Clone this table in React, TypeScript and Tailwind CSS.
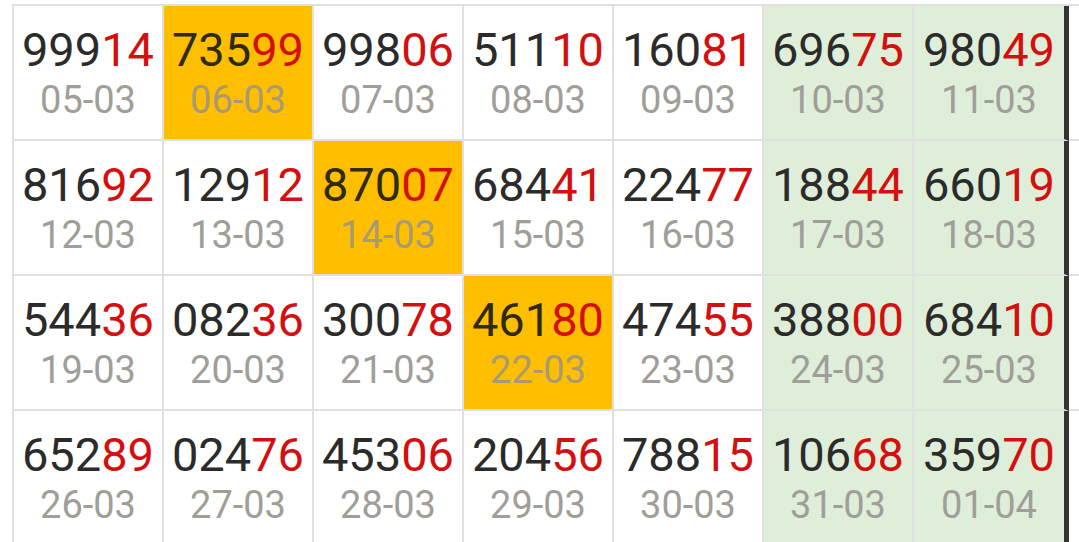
import React from "react";

type Cell = { n: string; d: string; hl?: boolean };

const rows: Cell[][] = [
  [
    { n: "99914", d: "05-03" },
    { n: "73599", d: "06-03", hl: true },
    { n: "99806", d: "07-03" },
    { n: "51110", d: "08-03" },
    { n: "16081", d: "09-03" },
    { n: "69675", d: "10-03" },
    { n: "98049", d: "11-03" },
  ],
  [
    { n: "81692", d: "12-03" },
    { n: "12912", d: "13-03" },
    { n: "87007", d: "14-03", hl: true },
    { n: "68441", d: "15-03" },
    { n: "22477", d: "16-03" },
    { n: "18844", d: "17-03" },
    { n: "66019", d: "18-03" },
  ],
  [
    { n: "54436", d: "19-03" },
    { n: "08236", d: "20-03" },
    { n: "30078", d: "21-03" },
    { n: "46180", d: "22-03", hl: true },
    { n: "47455", d: "23-03" },
    { n: "38800", d: "24-03" },
    { n: "68410", d: "25-03" },
  ],
  [
    { n: "65289", d: "26-03" },
    { n: "02476", d: "27-03" },
    { n: "45306", d: "28-03" },
    { n: "20456", d: "29-03" },
    { n: "78815", d: "30-03" },
    { n: "10668", d: "31-03" },
    { n: "35970", d: "01-04" },
  ],
];

function CellView({ c, col }: { c: Cell; col: number }) {
  const weekend = col >= 5;
  const bg = c.hl ? "bg-[#ffbf00]" : weekend ? "bg-[#dfeed8]" : "bg-white";
  const last = col === 6;
  const border = last
    ? "w-[155px] border-b-2 border-b-[#e0e0e0] border-r-[5px] border-r-[#333333]"
    : "w-[150px] border-b-2 border-r-2 border-[#e0e0e0]";
  return (
    <div className={`${bg} ${border} h-[135px] shrink-0 flex flex-col items-center justify-center`}>
      <div className={`text-[47px] leading-none tracking-normal ${c.hl ? "text-[#2f2a12]" : "text-[#2b2b2b]"}`}>
        {c.n.slice(0, 3)}
        <span className="text-[#d40f0f]">{c.n.slice(3)}</span>
      </div>
      <div className={`mt-[8px] text-[38px] leading-none ${c.hl ? "text-[#a89a74]" : "text-[#a09e99]"}`}>
        {c.d}
      </div>
    </div>
  );
}

export default function App() {
  return (
    <div
      className="w-[1079px] h-[542px] overflow-hidden bg-white"
      style={{ fontFamily: "Roboto, 'Noto Sans', sans-serif" }}
    >
      <div className="pt-[4px] pl-[12px]">
        <div className="flex flex-col border-t-2 border-[#e0e0e0] w-[1080px]">
          {rows.map((r, ri) => (
            <div key={ri} className="flex">
              <div className="w-[2px] h-[135px] bg-[#e0e0e0] shrink-0" />
              {r.map((c, ci) => (
                <CellView key={ci} c={c} col={ci} />
              ))}
              <div className="w-[40px] h-[135px] shrink-0 border-b-2 border-[#e0e0e0] bg-white" />
            </div>
          ))}
        </div>
      </div>
    </div>
  );
}
